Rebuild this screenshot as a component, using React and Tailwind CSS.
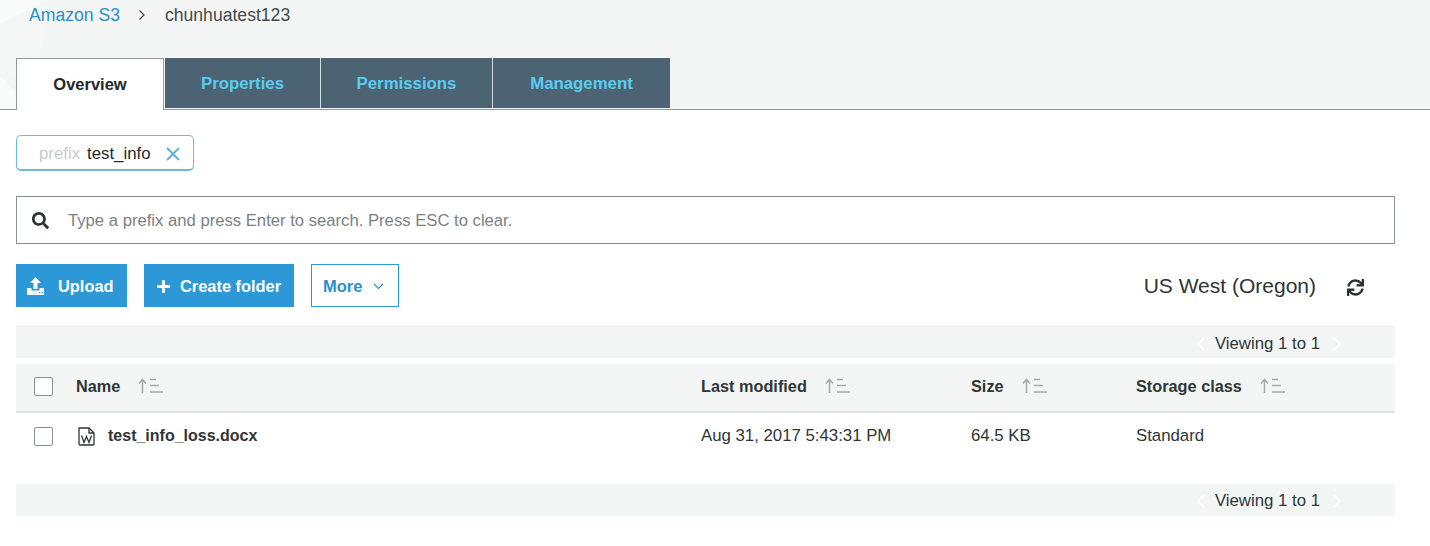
import React from "react";
import { FaSearch, FaPlus, FaSync } from "react-icons/fa";

const SortIcon = () => (
  <svg width="25" height="16" viewBox="0 0 25 16" className="text-[#a3abac]" fill="none" stroke="currentColor">
    <path d="M4.500 15V2M1 5.500 4.500 1.500 8 5.500" strokeWidth="1.500" />
    <path d="M12 1.500h6M12 7.500h9M12 14h13" strokeWidth="1.700" />
  </svg>
);

const UploadIcon = () => (
  <svg width="19" height="18" viewBox="0 0 19 18" fill="white">
    <path d="M9.500 0 15 6h-3.500v6h-4V6H4z" />
    <path d="M1 11h4.500v2.500h8V11H18v6a1 1 0 0 1-1 1H2a1 1 0 0 1-1-1z" />
    <path d="M13 15h1.500v1H13zM15.500 15H17v1h-1.500z" fill="#2c98d8" />
  </svg>
);

const WordIcon = () => (
  <svg width="17" height="19" viewBox="0 0 17 19" fill="none" stroke="#2e3636" strokeWidth="1.300">
    <path d="M1 1h10l5 5v11a1 1 0 0 1-1 1H2a1 1 0 0 1-1-1z" />
    <path d="M11 1v5h5" />
    <path d="M3.500 8.500l2.500 7 2.500-6 2.500 6 2.500-7" strokeWidth="1.300" />
  </svg>
);

const Pager = ({ className }) => (
  <div className={`flex items-center justify-end h-8 bg-[#f4f6f6] pr-[75px] ${className}`}>
    <span className="text-white mr-[10px]">
      <svg width="8" height="14" viewBox="0 0 8 14" fill="none" stroke="currentColor" strokeWidth="1.500">
        <path d="M7 1 1 7l6 6" />
      </svg>
    </span>
    <span className="text-[16.800px] text-[#2e3636]">Viewing 1 to 1</span>
    <span className="text-white ml-[13px] -mr-[21px]">
      <svg width="8" height="14" viewBox="0 0 8 14" fill="none" stroke="currentColor" strokeWidth="1.500">
        <path d="m1 1 6 6-6 6" />
      </svg>
    </span>
  </div>
);

const columns = ["Name", "Last modified", "Size", "Storage class"];

const Checkbox = () => (
  <span className="block w-[19px] h-[19px] rounded-[2px] border border-[#8a8f90] bg-white ml-[18px]" />
);

export default function App() {
  return (
    <div className="w-[1430px] h-[546px] overflow-hidden bg-white font-['Liberation_Sans',Arial,sans-serif]">
      <div className="relative h-[110px] bg-[#f4f6f6] border-b border-[#8f9a9c] px-4 flex flex-col">
        {/* faint background shapes behind the breadcrumb */}
        <svg className="absolute left-0 top-0" width="60" height="109" viewBox="0 0 60 109">
          <path d="M0 0h48L0 24z" fill="#f9fafa" />
          <path d="M0 24 48 0l-4 30-6 45H0z" fill="#f5f7f7" />
          <path d="M0 76l16 17v16H0z" fill="#f9fafa" />
        </svg>
        <div className="relative h-[58px] shrink-0 pl-[13px] pt-[3px] flex items-start text-[17.600px] leading-6">
          <span className="text-[#2c8fc9]">Amazon S3</span>
          <span className="ml-[18px] mr-[19px] text-[#444b4c] mt-[6px]">
            <svg width="8" height="12" viewBox="0 0 8 12" fill="none" stroke="currentColor" strokeWidth="1.300">
              <path d="m1.500 1.500 4.500 4.500-4.500 4.500" />
            </svg>
          </span>
          <span className="text-[#444b4c]">chunhuatest123</span>
        </div>
        <div className="relative flex h-[51px] shrink-0 items-start">
          <div className="w-[148px] h-[52px] bg-white border border-b-0 border-[#8f9a9c] flex items-center justify-center text-[16.500px] font-bold text-[#23292a] relative z-10">
            Overview
          </div>
          <div className="ml-px flex h-[50px] bg-[#4b6373] text-[16.800px] font-bold text-[#5accf2]">
            <div className="w-[156px] pt-px flex items-center justify-center border-r border-[#d5dbdd]">Properties</div>
            <div className="w-[172px] pt-px flex items-center justify-center border-r border-[#d5dbdd]">Permissions</div>
            <div className="w-[177px] pt-px flex items-center justify-center">Management</div>
          </div>
        </div>
      </div>

      <div className="px-4 w-[1411px]">
        <div className="mt-[25px] w-[178px] h-[36px] rounded-[5px] border border-b-2 border-[#6fb9de] flex items-center pl-[22px] pt-[3px] text-[16.800px]">
          <span className="text-[#c8cccc]">prefix</span>
          <span className="ml-[7px] text-[#23292a]">test_info</span>
          <svg className="ml-[15px]" width="14" height="14" viewBox="0 0 14 14" fill="none" stroke="#5cb0dc" strokeWidth="1.800">
            <path d="m1 1 12 12M13 1 1 13" />
          </svg>
        </div>

        <div className="mt-[25px] h-[48px] border border-[#8a8f90] flex items-center pl-[15px] text-[16.670px] text-[#7b8182]">
          <FaSearch className="text-[#2b3233] text-[17px]" />
          <span className="ml-[19px]">Type a prefix and press Enter to search. Press ESC to clear.</span>
        </div>

        <div className="mt-[20px] h-[43px] flex items-center">
          <div className="w-[111px] h-full bg-[#2c98d8] flex items-center pl-[10px] pt-px text-white font-bold text-[16.400px]">
            <UploadIcon />
            <span className="ml-[13px]">Upload</span>
          </div>
          <div className="ml-[17px] w-[150px] h-full bg-[#2c98d8] flex items-center pl-[12px] pt-px text-white font-bold text-[16.400px]">
            <FaPlus className="text-[15px]" />
            <span className="ml-[9px]">Create folder</span>
          </div>
          <div className="ml-[17px] w-[88px] h-full border border-[#2c98d8] flex items-center pl-[11px] pt-px text-[#2c8fc9] font-bold text-[16.500px]">
            More
            <svg className="ml-[11px]" width="11" height="7" viewBox="0 0 11 7" fill="none" stroke="currentColor" strokeWidth="1.200">
              <path d="m1 1 4.500 4.500L10 1" />
            </svg>
          </div>
          <span className="ml-auto pt-px text-[21px] text-[#2e3636]">US West (Oregon)</span>
          <FaSync className="ml-[31px] mr-[31px] mt-[3px] text-[17px] text-[#2b3233]" />
        </div>

        <Pager className="mt-[19px] pt-[2px] border-t border-[#e9ebeb]" />

        <div className="mt-[6px] h-[49px] pb-[3px] bg-[#f4f6f6] border-b-2 border-[#dfe2e2] grid grid-cols-[60px_625px_270px_165px_1fr] items-center">
          <Checkbox />
          {columns.map((c) => (
            <div key={c} className="flex items-center text-[16.300px] font-bold text-[#2e3636]">
              {c}
              <span className="ml-[18px]">
                <SortIcon />
              </span>
            </div>
          ))}
        </div>

        <div className="h-[46px] grid grid-cols-[60px_625px_270px_165px_1fr] items-center text-[16.800px] text-[#2e3636]">
          <Checkbox />
          <div className="flex items-center font-bold text-[16px] pl-[2px]">
            <WordIcon />
            <span className="ml-[13px]">test_info_loss.docx</span>
          </div>
          <div>Aug 31, 2017 5:43:31 PM</div>
          <div>64.5 KB</div>
          <div>Standard</div>
        </div>

        <Pager className="mt-[25px] pt-px" />
      </div>
    </div>
  );
}
